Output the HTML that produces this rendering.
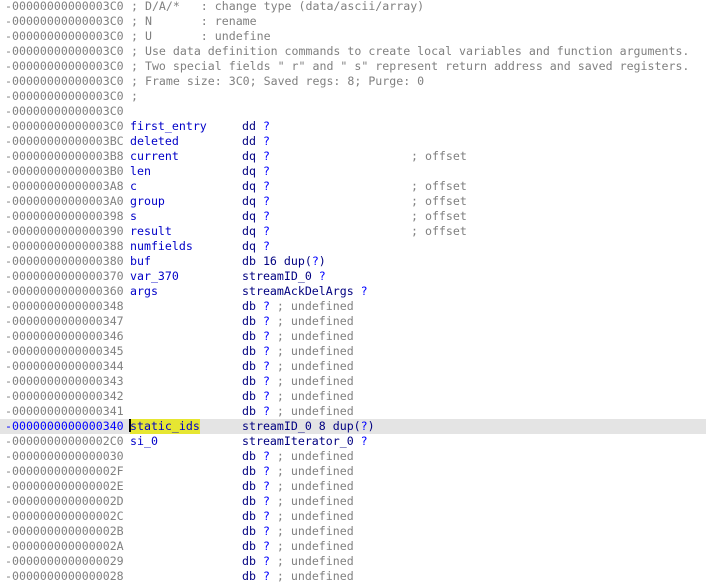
<!DOCTYPE html>
<html><head><meta charset="utf-8"><style>
body{margin:0;width:706px;height:575px;overflow:hidden;background:#fff;font-family:"DejaVu Sans Mono","Liberation Mono",monospace;font-size:11.6px;}
.r{position:absolute;left:0;width:706px;height:15px;line-height:15px;white-space:pre;}
.r span{position:absolute;top:0}
.a{left:5px;color:#808080}
.h{left:131px;color:#808080}
.n{left:130px;color:#0000c8}
.t{left:242px;color:#000080}
.q{color:#0000ff}
.c{left:411px;color:#808080}
.g{color:#808080}
.sel{background:#e4e4e4}
.sel .a{color:#0000ff}
.hl{background:#e6e632}
.cur{position:absolute;left:129px;top:1px;width:2px;height:13px;background:#000}
</style></head><body>
<div id="w"></div>
<script>
var rows=[
["-00000000000003C0","h","; D/A/*   : change type (data/ascii/array)"],
["-00000000000003C0","h","; N       : rename"],
["-00000000000003C0","h","; U       : undefine"],
["-00000000000003C0","h","; Use data definition commands to create local variables and function arguments."],
["-00000000000003C0","h","; Two special fields \" r\" and \" s\" represent return address and saved registers."],
["-00000000000003C0","h","; Frame size: 3C0; Saved regs: 8; Purge: 0"],
["-00000000000003C0","h",";"],
["-00000000000003C0","h",""],
["-00000000000003C0","d","first_entry","dd",""],
["-00000000000003BC","d","deleted","dd",""],
["-00000000000003B8","d","current","dq","; offset"],
["-00000000000003B0","d","len","dq",""],
["-00000000000003A8","d","c","dq","; offset"],
["-00000000000003A0","d","group","dq","; offset"],
["-0000000000000398","d","s","dq","; offset"],
["-0000000000000390","d","result","dq","; offset"],
["-0000000000000388","d","numfields","dq",""],
["-0000000000000380","x","buf","db 16 dup(?)"],
["-0000000000000370","x","var_370","streamID_0 ?"],
["-0000000000000360","x","args","streamAckDelArgs ?"],
["-0000000000000348","u"],["-0000000000000347","u"],["-0000000000000346","u"],["-0000000000000345","u"],
["-0000000000000344","u"],["-0000000000000343","u"],["-0000000000000342","u"],["-0000000000000341","u"],
["-0000000000000340","s","static_ids","streamID_0 8 dup(?)"],
["-00000000000002C0","x","si_0","streamIterator_0 ?"],
["-0000000000000030","u"],["-000000000000002F","u"],["-000000000000002E","u"],["-000000000000002D","u"],
["-000000000000002C","u"],["-000000000000002B","u"],["-000000000000002A","u"],["-0000000000000029","u"],["-0000000000000028","u"]
];
var h="";
rows.forEach(function(r,i){
 var top=-1+i*15, cls="r", inner='<span class="a">'+r[0]+'</span>';
 if(r[1]=="h") inner+='<span class="h">'+r[2].replace(/</g,"&lt;")+'</span>';
 else if(r[1]=="d"){inner+='<span class="n">'+r[2]+'</span><span class="t">'+r[3]+' <b class="q" style="font-weight:normal">?</b></span>'; if(r[4]) inner+='<span class="c">'+r[4]+'</span>';}
 else if(r[1]=="x"){inner+='<span class="n">'+r[2]+'</span><span class="t">'+r[3].replace("?",'<i class="q" style="font-style:normal">?</i>')+'</span>';}
 else if(r[1]=="u"){inner+='<span class="t">db <i class="q" style="font-style:normal">?</i> <i class="g" style="font-style:normal">; undefined</i></span>';}
 else if(r[1]=="s"){cls+=" sel";inner+='<span class="n hl">'+r[2]+'</span><span class="cur"></span><span class="t">'+r[3].replace("(?)",'(<i class="q" style="font-style:normal">?</i>)')+'</span>';}
 h+='<div class="'+cls+'" style="top:'+top+'px">'+inner+'</div>';
});
document.getElementById("w").innerHTML=h;
</script>
</body></html>
